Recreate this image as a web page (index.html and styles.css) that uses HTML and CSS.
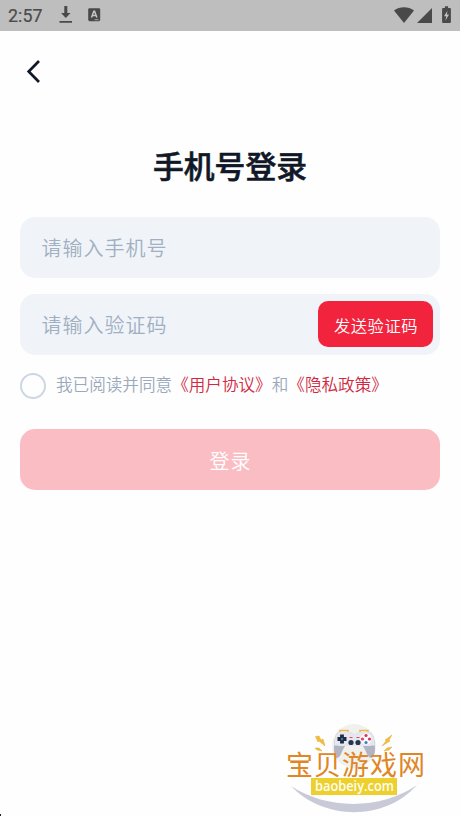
FILE: index.html
```html
<!DOCTYPE html>
<html lang="zh-CN">
<head>
<meta charset="utf-8">
<title>手机号登录</title>
<link rel="stylesheet" href="styles.css">
</head>
<body>
<header class="status">
  <span class="time">2:57</span>
  <svg class="download" width="14" height="18" viewBox="0 0 14 18"><path d="M5.3 0h3v7h3.2L6.8 12 2.1 7h3.200zM.5 15h12.500v1.800H.5z"/></svg>
  <svg class="badge" width="13" height="14" viewBox="0 0 13 14"><rect x=".2" y=".2" width="12" height="13" rx="1.400"/><path class="mark" d="M3.500 9.500 5.800 3.200h.8l2.300 6.300M4.300 7.500h3.900"/><path class="dots" d="M6.500 11.700h4"/></svg>
  <svg class="signals" width="60" height="18" viewBox="0 0 60 18"><path d="M0 4.500C6 .2 14 .2 20 4.500L10 17zM23 17 38 2v15zM50.900 2V.3h3.200V2H56c.5 0 .9.400.9.900v13.200c0 .5-.4.9-.9.9h-7c-.5 0-.9-.4-.9-.9V2.900c0-.5.4-.9.900-.9z"/><path class="bolt" d="M53.500 4.700 50 10.300h2.300l-1 4.500 3.700-6.300h-2.200z"/></svg>
</header>
<main class="page">
  <button class="back" aria-label="返回"><svg width="16" height="24" viewBox="0 0 16 24"><path d="M13 2 2.700 12.500 13 23"/></svg></button>
  <h1 class="title">手机号登录</h1>
  <div class="field"><span>请输入手机号</span></div>
  <div class="field code"><span>请输入验证码</span><button class="send">发送验证码</button></div>
  <div class="agree"><i class="radio"></i><p>我已阅读并同意<b>《用户协议》</b>和<b>《隐私政策》</b></p></div>
  <button class="login">登录</button>
</main>
<svg class="logo" width="150" height="102" viewBox="0 0 150 102">
  <ellipse cx="74" cy="31" rx="22" ry="22" fill="#f0f0ef"/>
  <path d="M60 17v-1.500h8V17M80 17v-1.500h8V17" fill="none" stroke="#e9b84b" stroke-width="1.500"/>
  <path d="M59 17h11l3 2h3l3-2h11c4 1 5 10 5 17 0 6-2 9-4 9-4 0-5-9-9-13H66c-4 4-5 13-9 13-2 0-3-3-3-9 0-7 1-16 5-17z" fill="#b2b4c4"/>
  <path d="M59 17h11l3 2h3l3-2h11c3.500 1 4.500 7 4.800 14-1.300-1-3.300 0-6.800 0H61c-3.500 0-5.500-1-6.800 0 .3-7 1.300-13 4.800-14z" fill="#e6e6ef"/>
  <path d="M62 19.500v9M57.500 24h9" stroke="#1d2c42" stroke-width="3.800"/>
  <circle cx="62" cy="24" r="1.200" fill="#3977b7"/>
  <circle cx="71" cy="27.500" r="2.600" fill="#26364d"/><circle cx="78" cy="27.500" r="2.600" fill="#26364d"/>
  <path d="M69.500 22.500h3M76.500 22.500h3" stroke="#d84c60" stroke-width="1.200"/>
  <circle cx="86" cy="24" r="5.500" fill="#fafaff"/>
  <circle cx="86" cy="20.500" r="1.600" fill="#db3457"/><circle cx="89.500" cy="24" r="1.600" fill="#db3457"/><circle cx="86" cy="27.500" r="1.600" fill="#3485bb"/><circle cx="82.500" cy="24" r="1.600" fill="#dc4561"/>
  <g fill="#f4bf36" stroke="#db9928" stroke-width=".4"><path d="M35.500 21.500 39 21l2 4 2-1 2 7-6-5-1 1zM35 33h4l3 3-5-1zM112 20l-7 5 1 1-4 5 8-5-1-1zM112 32l-5 1-3 3 5-1z"/></g>
  <text class="brand" x="6" y="60" textLength="139" lengthAdjust="spacing">宝贝游戏网</text>
  <path d="M31 63h86v17H31z" fill="#edcf2d"/>
  <text class="site" x="35" y="76" textLength="79" lengthAdjust="spacingAndGlyphs">baobeiy.com</text>
  <path d="M11 71C47 95 101 95 137 70 104 107 43 105 11 71z" fill="#c8cad8"/>
</svg>
<i class="corner"></i>
</body>
</html>
```
FILE: styles.css
```css
* { box-sizing: border-box; }
body { margin: 0; height: 817px; overflow: hidden; position: relative; background: #fefefe; font-family: "Noto Sans CJK SC", sans-serif; font-weight: 350; }
button { border: 0; padding: 0; font: inherit; }
.status { height: 31px; background: #bebebe; display: flex; align-items: center; padding: 0 6px 1px 8px; fill: #494949; }
.time { width: 51px; font: 400 17.8px/30px Roboto, sans-serif; color: #4b4b4b; -webkit-text-stroke: .2px #4b4b4b; letter-spacing: .1px; padding-top: 1px; }
.badge { margin-left: 15px; }
.mark { fill: none; stroke: #c4c4c4; stroke-width: 1.5; }
.dots { stroke: #a8a8a8; stroke-width: 1; }
.signals { margin-left: auto; }
.bolt { fill: #c4c4c4; }
.page { padding: 27px 20px 0; display: flex; flex-direction: column; }
.back { width: 28px; height: 26px; padding-left: 5.5px; background: transparent; text-align: left; }
.back svg { display: block; fill: none; stroke: #101828; stroke-width: 2.7; }
.title { margin: 57px 0 29px; height: 47px; line-height: 47px; font-size: 30.8px; font-weight: 500; -webkit-text-stroke: .6px #101828; text-align: center; color: #101828; }
.field { height: 61px; border-radius: 15px; background: #f0f4f9; padding: 0 7px 2px 21.5px; display: flex; align-items: center; justify-content: space-between; color: #a0afc1; font-size: 20px; letter-spacing: 1px; }
.field span { padding-top: 2px; }
.field + .field { margin-top: 16px; }
.send { width: 115px; height: 46px; border-radius: 10px; background: #f2233d; color: #fff; font-size: 16.3px; letter-spacing: .5px; padding: 3px 0 0 1px; line-height: 43px; }
.agree { height: 25px; margin-top: 18px; display: flex; align-items: center; color: #9aa9bc; font-size: 16.6px; line-height: 25px; }
.radio { width: 26px; height: 26px; border: 2px solid #cdd7e3; border-radius: 50%; margin-right: 10px; }
.agree p { margin: -2px 0 0; white-space: nowrap; }
.agree b { font-weight: 350; color: #cf2940; }
.login { height: 61px; margin-top: 31px; border-radius: 15px; background: #fabdc4; color: #fff; font-size: 20px; letter-spacing: 1px; padding: 2px 0 0 1px; }
.logo { position: absolute; left: 280px; top: 715px; }
.brand { font: 400 27px "Noto Sans CJK SC", sans-serif; fill: #df8625; }
.site { font: 600 14px "Open Sans", sans-serif; fill: #fffef0; }
.corner { position: absolute; left: 0; bottom: 1px; width: 1px; height: 2px; background: #222; }
```
